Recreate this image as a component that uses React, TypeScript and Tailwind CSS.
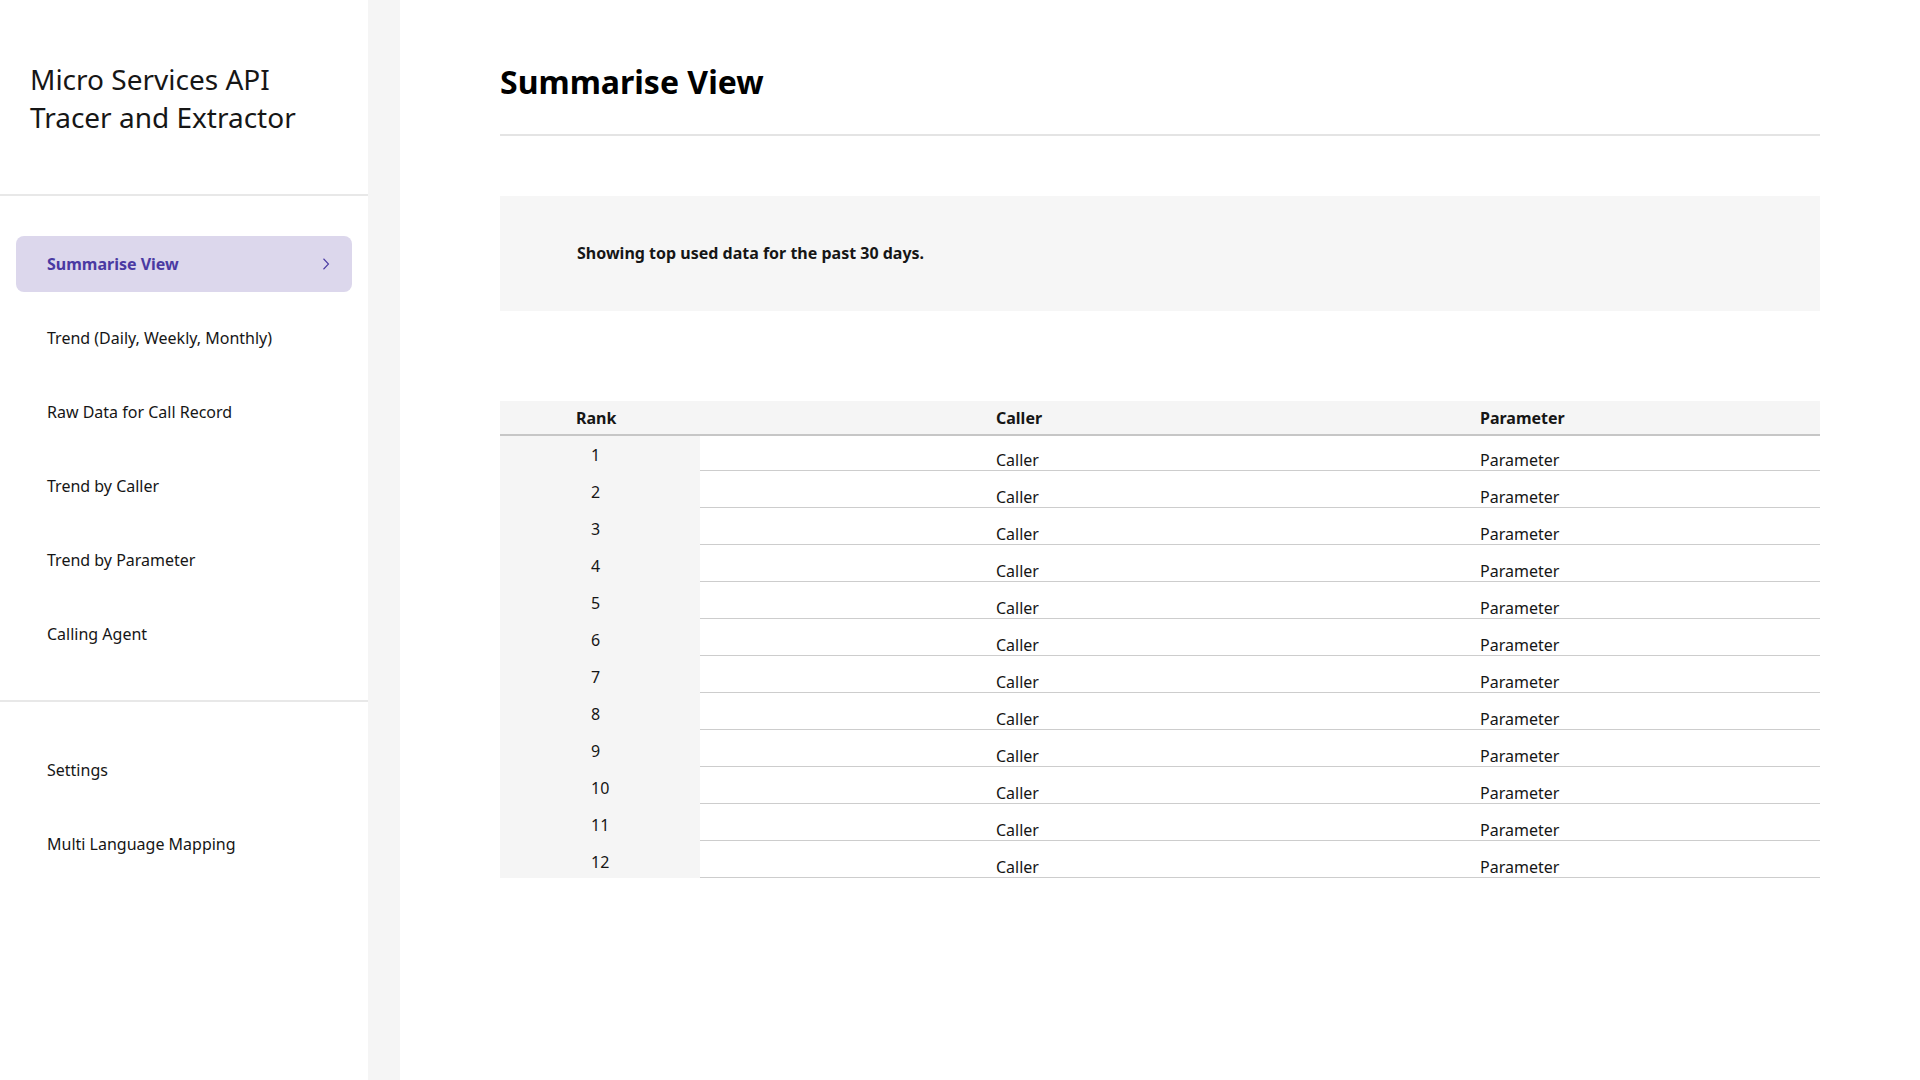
const mainNav = [
  'Summarise View',
  'Trend (Daily, Weekly, Monthly)',
  'Raw Data for Call Record',
  'Trend by Caller',
  'Trend by Parameter',
  'Calling Agent',
];

const extraNav = ['Settings', 'Multi Language Mapping'];

const rows = Array.from({ length: 12 }, (_, i) => ({
  rank: i + 1,
  caller: 'Caller',
  parameter: 'Parameter',
}));

function NavItem({ label, active }: { label: string; active?: boolean }) {
  if (active) {
    return (
      <div className="mx-4 flex h-14 items-center justify-between rounded-lg bg-[#dcd7ec] pl-[31px] pr-[22px]">
        <span className="text-base leading-[22px] font-bold text-[#4a3aa3]">{label}</span>
        <svg width="8" height="12" viewBox="0 0 8 12" fill="none" className="text-[#4a3aa3]">
          <path d="M1.5 0.75 L6.5 6 L1.5 11.25" stroke="currentColor" strokeWidth="1.1" />
        </svg>
      </div>
    );
  }
  return (
    <div className="mx-4 flex h-14 items-center pl-[31px]">
      <span className="text-base leading-[22px] text-[#161616]">{label}</span>
    </div>
  );
}

export default function App() {
  return (
    <div className="flex min-h-screen bg-white font-['Noto_Sans',sans-serif] text-[#161616]">
      <aside className="w-[368px] shrink-0 bg-white">
        <div className="border-b-2 border-[#e8e8e8] pb-[58px] pl-[30px] pt-[60px]">
          <h2 className="text-[28px] leading-[38px] font-normal text-[#161616]">
            Micro Services API
            <br />
            Tracer and Extractor
          </h2>
        </div>
        <nav className="flex flex-col gap-[18px] border-b-2 border-[#e8e8e8] pb-[38px] pt-10">
          {mainNav.map((label, i) => (
            <NavItem key={label} label={label} active={i === 0} />
          ))}
        </nav>
        <nav className="flex flex-col gap-[18px] pt-10">
          {extraNav.map((label) => (
            <NavItem key={label} label={label} />
          ))}
        </nav>
      </aside>
      <div className="w-8 shrink-0 bg-[#f5f5f5]" />

      <main className="flex-1 px-[100px]">
        <div className="border-b-2 border-[#e4e4e4] pb-[30px] pt-[60px]">
          <h1 className="text-[32px] leading-[44px] font-bold text-[#000]">Summarise View</h1>
        </div>

        <div className="mt-[60px] flex h-[115px] items-center bg-[#f6f6f6] pb-[2px] pl-[77px]">
          <p className="text-base leading-[22px] font-bold text-[#161616]">
            Showing top used data for the past 30 days.
          </p>
        </div>

        <div className="mt-[90px]">
          <div className="flex h-[35px] items-center border-b-2 border-[#c6c6c6] bg-[#f5f5f5] pt-px text-base leading-[22px] font-bold">
            <div className="w-[200px] pl-[76px]">Rank</div>
            <div className="w-[780px] pl-[296px]">Caller</div>
            <div className="flex-1">Parameter</div>
          </div>
          {rows.map((r, i) => (
            <div key={r.rank} className={`flex text-base ${i === 0 ? 'h-[35px]' : 'h-[37px]'}`}>
              <div className={`w-[200px] bg-[#f5f5f5] pl-[91px] leading-[22px] ${i === 0 ? 'pt-2' : 'pt-2.5'}`}>{r.rank}</div>
              <div className="flex flex-1 items-end border-b border-[#cdcdcd] leading-[20px]">
                <div className="w-[780px] pl-[296px]">{r.caller}</div>
                <div className="flex-1">{r.parameter}</div>
              </div>
            </div>
          ))}
        </div>
      </main>
    </div>
  );
}
